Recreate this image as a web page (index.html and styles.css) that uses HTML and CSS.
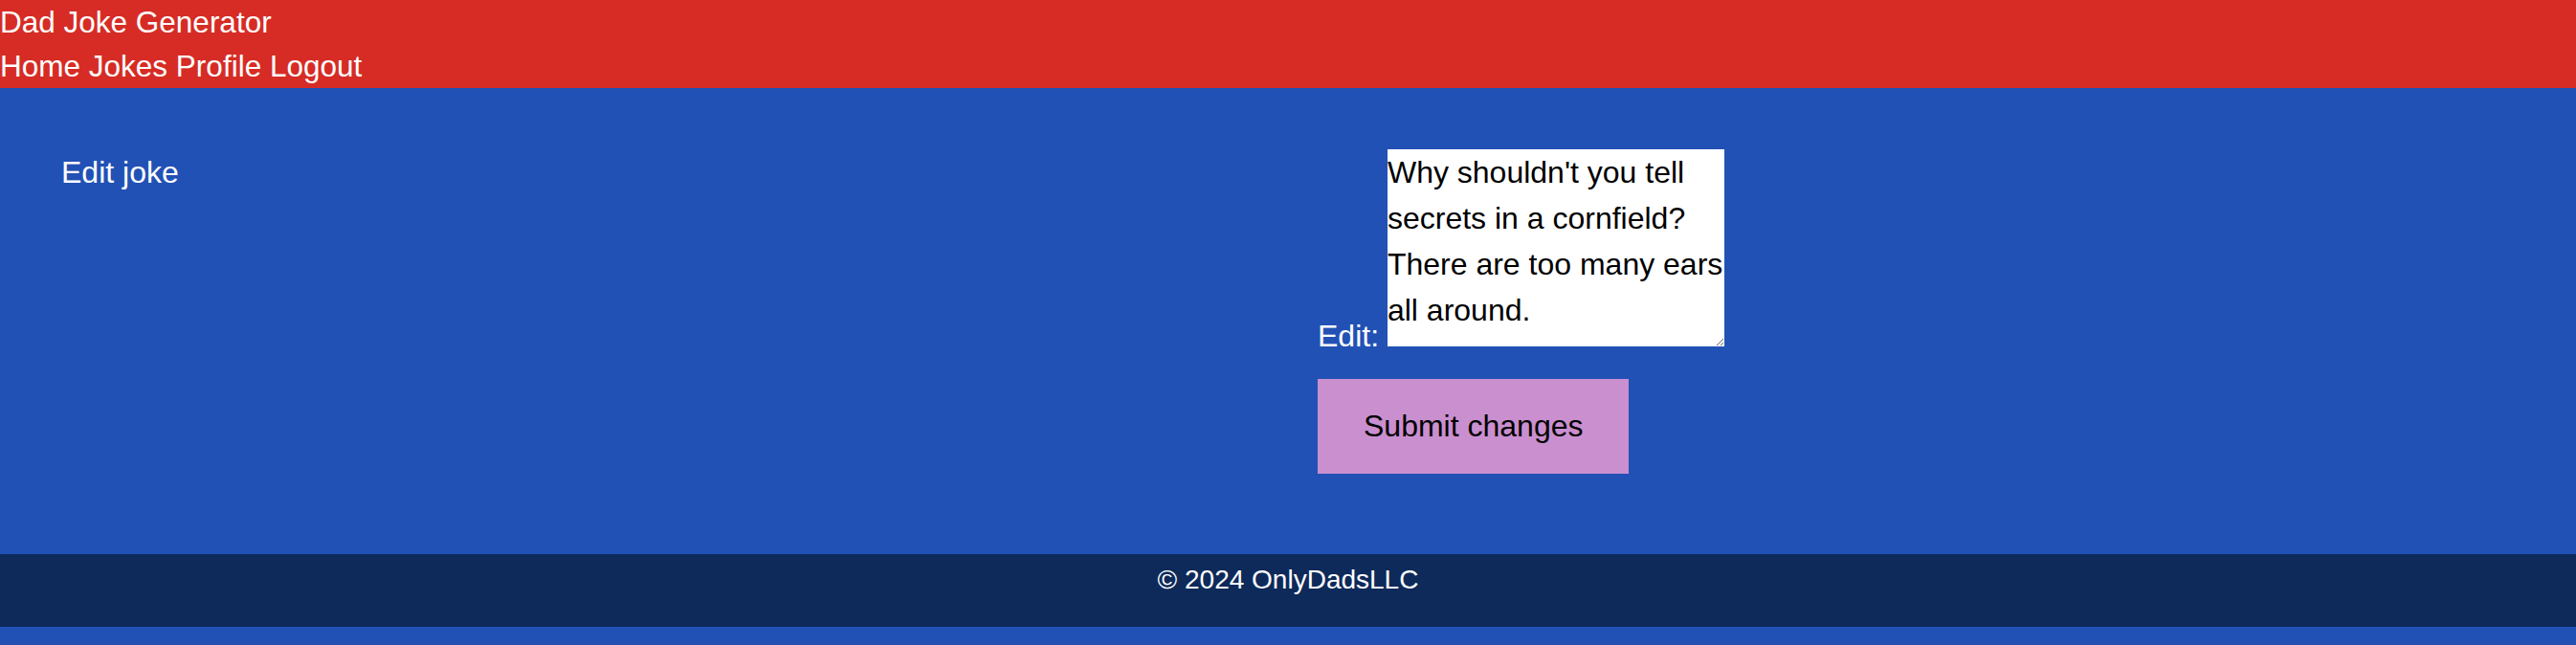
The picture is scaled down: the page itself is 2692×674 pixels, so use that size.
FILE: index.html
```html
<!DOCTYPE html>
<html lang="en">
<head>
<meta charset="utf-8">
<title>Dad Joke Generator</title>
<link rel="stylesheet" href="styles.css">
</head>
<body>
<header class="site-header">
  <div class="brand">Dad Joke Generator</div>
  <nav class="nav"><a href="#">Home</a> <a href="#">Jokes</a> <a href="#">Profile</a> <a href="#">Logout</a></nav>
</header>
<main class="main">
  <h2 class="title">Edit joke</h2>
  <form class="edit-form">
    <div class="field"><label for="joke">Edit:</label> <textarea id="joke" class="joke-input">Why shouldn't you tell secrets in a cornfield? There are too many ears all around.</textarea></div>
    <button type="button" class="submit">Submit changes</button>
  </form>
</main>
<footer class="site-footer">© 2024 OnlyDadsLLC</footer>
</body>
</html>
```

FILE: styles.css
```css
html, body {
  margin: 0;
  padding: 0;
}
body {
  background: #2251b5;
  color: #ffffff;
  font-family: "Liberation Sans", Arial, sans-serif;
  font-size: 32px;
  line-height: 46px;
}
.site-header {
  background: #d62c25;
  height: 92px;
}
.brand, .nav {
  font-size: 31.5px;
  line-height: 46px;
}
.nav a {
  color: #ffffff;
  text-decoration: none;
}
.main {
  display: grid;
  grid-template-columns: 1fr 1fr;
  column-gap: 62px;
  padding: 64px 64px 0 64px;
  height: 423px;
}
.title {
  margin: 0;
  font-size: 32px;
  font-weight: normal;
  line-height: 48px;
}
.edit-form {
  margin: 0;
}
.field {
  line-height: 46px;
}
.joke-input {
  width: 352px;
  height: 206px;
  box-sizing: border-box;
  border: none;
  padding: 0;
  margin: 0;
  background: #ffffff;
  color: #000000;
  font-family: "Liberation Sans", Arial, sans-serif;
  font-size: 32px;
  line-height: 48px;
  vertical-align: baseline;
}
.submit {
  display: block;
  margin-top: 22px;
  background: #ca8fcf;
  color: #000000;
  border: none;
  padding: 26px 48px;
  font-family: "Liberation Sans", Arial, sans-serif;
  font-size: 32px;
  line-height: 47px;
}
.site-footer {
  background: #0e2a5a;
  text-align: center;
  height: 76px;
  box-sizing: border-box;
  padding-top: 4px;
  font-size: 28px;
  line-height: 46px;
}
```
